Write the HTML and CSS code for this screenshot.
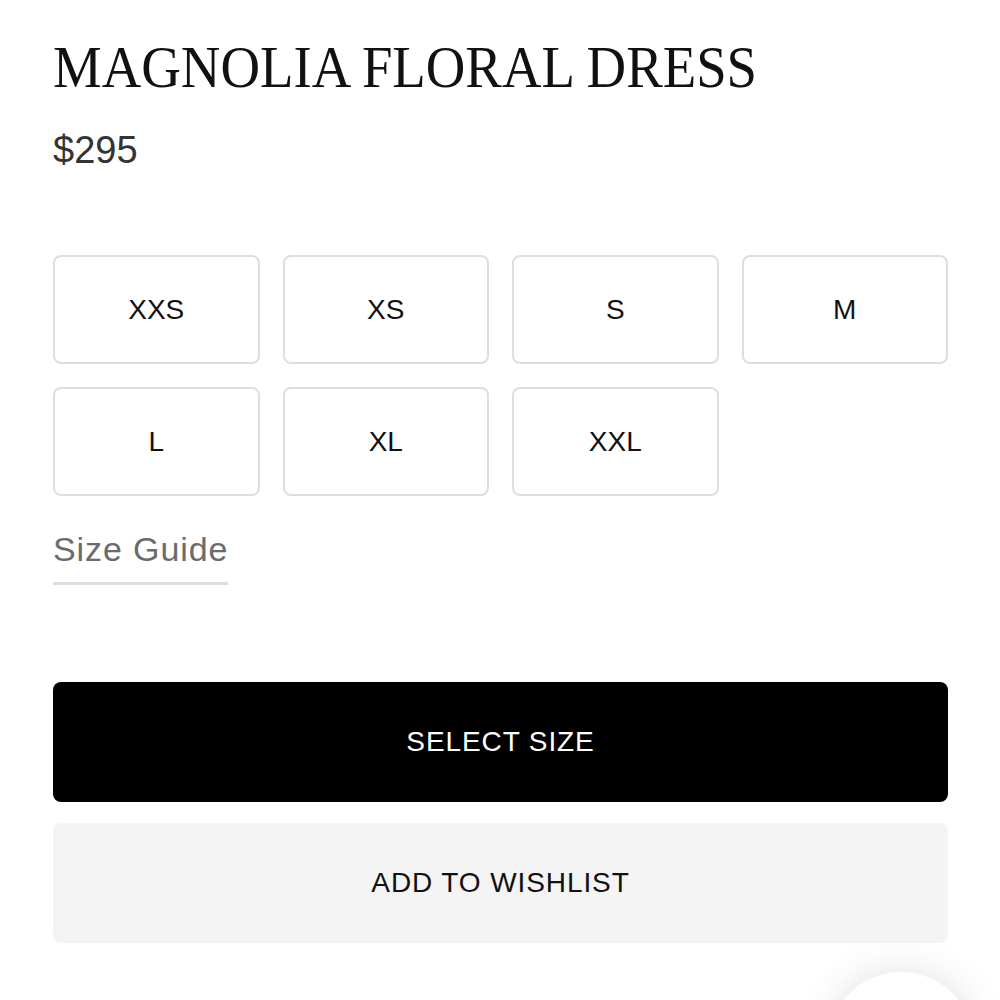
FILE: index.html
```html
<!DOCTYPE html>
<html>
<head>
<meta charset="utf-8">
<link rel="stylesheet" href="styles.css">
</head>
<body>
<main class="product">
  <h1 class="title">MAGNOLIA FLORAL DRESS</h1>
  <div class="price">$295</div>
  <div class="sizes">
    <button class="size">XXS</button>
    <button class="size">XS</button>
    <button class="size">S</button>
    <button class="size">M</button>
    <button class="size">L</button>
    <button class="size">XL</button>
    <button class="size">XXL</button>
  </div>
  <a class="guide">Size Guide</a>
  <div class="actions">
    <button class="btn btn-primary">SELECT SIZE</button>
    <button class="btn btn-secondary">ADD TO WISHLIST</button>
  </div>
</main>
<div class="fab"></div>
</body>
</html>
```
FILE: styles.css
```css
html, body {
  margin: 0;
  padding: 0;
  background: #fff;
  overflow: hidden;
}
body {
  width: 1000px;
  height: 1000px;
  position: relative;
  font-family: "Liberation Sans", Arial, sans-serif;
}
.product {
  padding: 0 52px 0 53px;
  display: flex;
  flex-direction: column;
}
.title {
  margin: 37px 0 0 0;
  font-family: "Liberation Serif", "Times New Roman", serif;
  font-weight: normal;
  font-size: 60px;
  line-height: 60px;
  color: #111;
  transform: scaleX(0.913);
  transform-origin: left center;
  white-space: nowrap;
}
.price {
  margin-top: 33px;
  font-size: 38px;
  line-height: 40px;
  color: #333;
}
.sizes {
  margin-top: 85px;
  display: grid;
  grid-template-columns: repeat(4, 1fr);
  gap: 23px;
}
.size {
  height: 109px;
  border: 2px solid #dedede;
  border-radius: 8px;
  background: #fff;
  font-family: "Liberation Sans", Arial, sans-serif;
  font-size: 28px;
  color: #111;
  padding: 0;
}
.guide {
  align-self: flex-start;
  margin-top: 34px;
  font-size: 34px;
  line-height: 38px;
  letter-spacing: 0.9px;
  color: #6b6b6b;
  padding-bottom: 14px;
  border-bottom: 3px solid #ddd;
}
.actions {
  margin-top: 97px;
  display: flex;
  flex-direction: column;
  gap: 21px;
}
.btn {
  height: 120px;
  border: none;
  border-radius: 8px;
  font-family: "Liberation Sans", Arial, sans-serif;
  font-size: 28px;
  letter-spacing: 0.9px;
  padding: 0;
}
.btn-primary {
  background: #000;
  color: #fff;
}
.btn-secondary {
  background: #f4f4f4;
  color: #111;
}
.fab {
  position: absolute;
  left: 828px;
  top: 972px;
  width: 146px;
  height: 146px;
  border-radius: 50%;
  background: #fff;
  box-shadow: 0 0 40px rgba(0,0,0,0.12);
}
```
